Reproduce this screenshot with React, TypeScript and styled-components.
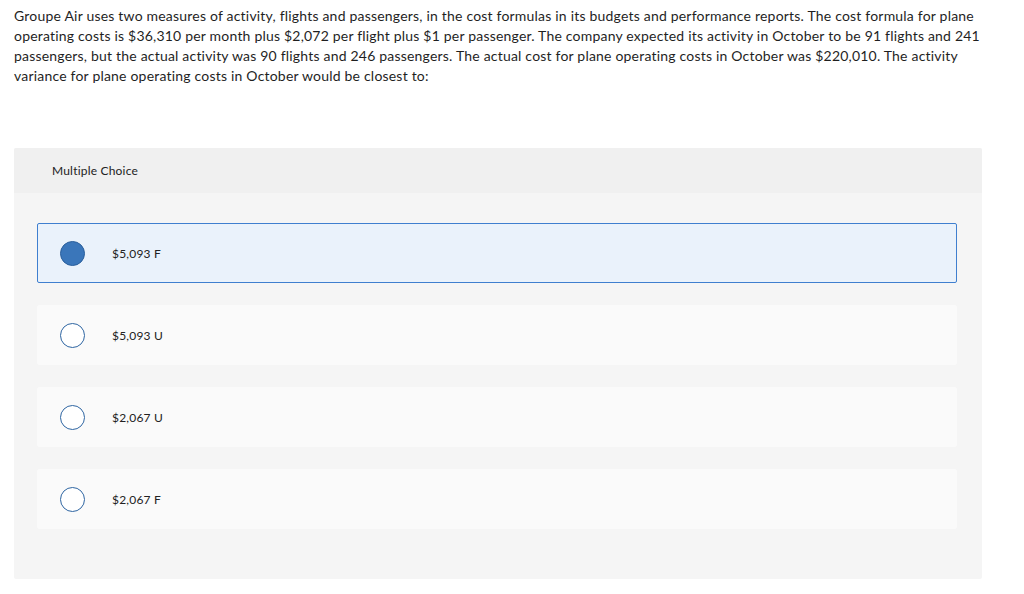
import styled, { createGlobalStyle } from 'styled-components'

const Global = createGlobalStyle`
  html, body {
    margin: 0;
    padding: 0;
    background: #ffffff;
  }
  body {
    font-family: Lato, "Open Sans", Arial, sans-serif;
    color: #1a1a1a;
    letter-spacing: 0.2px;
  }
`

const Page = styled.div`
  padding: 6px 14px 16px 14px;
  width: 968px;
`

const Question = styled.p`
  margin: 0;
  font-size: 14px;
  line-height: 20px;
  color: #1f1f1f;
  width: 966px;
`

const Panel = styled.section`
  margin-top: 62px;
  background: #f5f5f5;
  border-radius: 2px;
  padding-bottom: 50px;
`

const PanelHeader = styled.div`
  height: 45px;
  background: #f0f0f0;
  display: flex;
  align-items: center;
  padding-left: 38px;
  font-size: 12px;
  color: #222;
  border-radius: 2px 2px 0 0;
`

const Options = styled.div`
  display: flex;
  flex-direction: column;
  gap: 22px;
  padding: 30px 25px 0 23px;
`

const Option = styled.label<{ $selected?: boolean }>`
  box-sizing: border-box;
  height: 60px;
  display: flex;
  align-items: center;
  padding-left: 22px;
  gap: 27px;
  border-radius: 2px;
  background: ${p => (p.$selected ? '#eaf2fb' : '#fafafa')};
  border: 1px solid ${p => (p.$selected ? '#3f7fcf' : '#fafafa')};
  font-size: 12px;
  color: #222;
  cursor: pointer;
`

const Radio = styled.span<{ $selected?: boolean }>`
  box-sizing: border-box;
  width: 25px;
  height: 25px;
  border-radius: 50%;
  border: 1px solid ${p => (p.$selected ? '#2a5f9c' : '#2e65a2')};
  background: ${p => (p.$selected ? '#3a76ba' : '#ffffff')};
  flex-shrink: 0;
`

const choices = ['$5,093 F', '$5,093 U', '$2,067 U', '$2,067 F']

export default function App() {
  return (
    <Page>
      <Global />
      <Question>
        Groupe Air uses two measures of activity, flights and passengers, in the cost formulas in its budgets and
        performance reports. The cost formula for plane operating costs is $36,310 per month plus $2,072 per flight
        plus $1 per passenger. The company expected its activity in October to be 91 flights and 241 passengers, but
        the actual activity was 90 flights and 246 passengers. The actual cost for plane operating costs in October
        was $220,010. The activity variance for plane operating costs in October would be closest to:
      </Question>
      <Panel>
        <PanelHeader>Multiple Choice</PanelHeader>
        <Options>
          {choices.map((c, i) => (
            <Option key={c} $selected={i === 0}>
              <Radio $selected={i === 0} />
              <span>{c}</span>
            </Option>
          ))}
        </Options>
      </Panel>
    </Page>
  )
}
